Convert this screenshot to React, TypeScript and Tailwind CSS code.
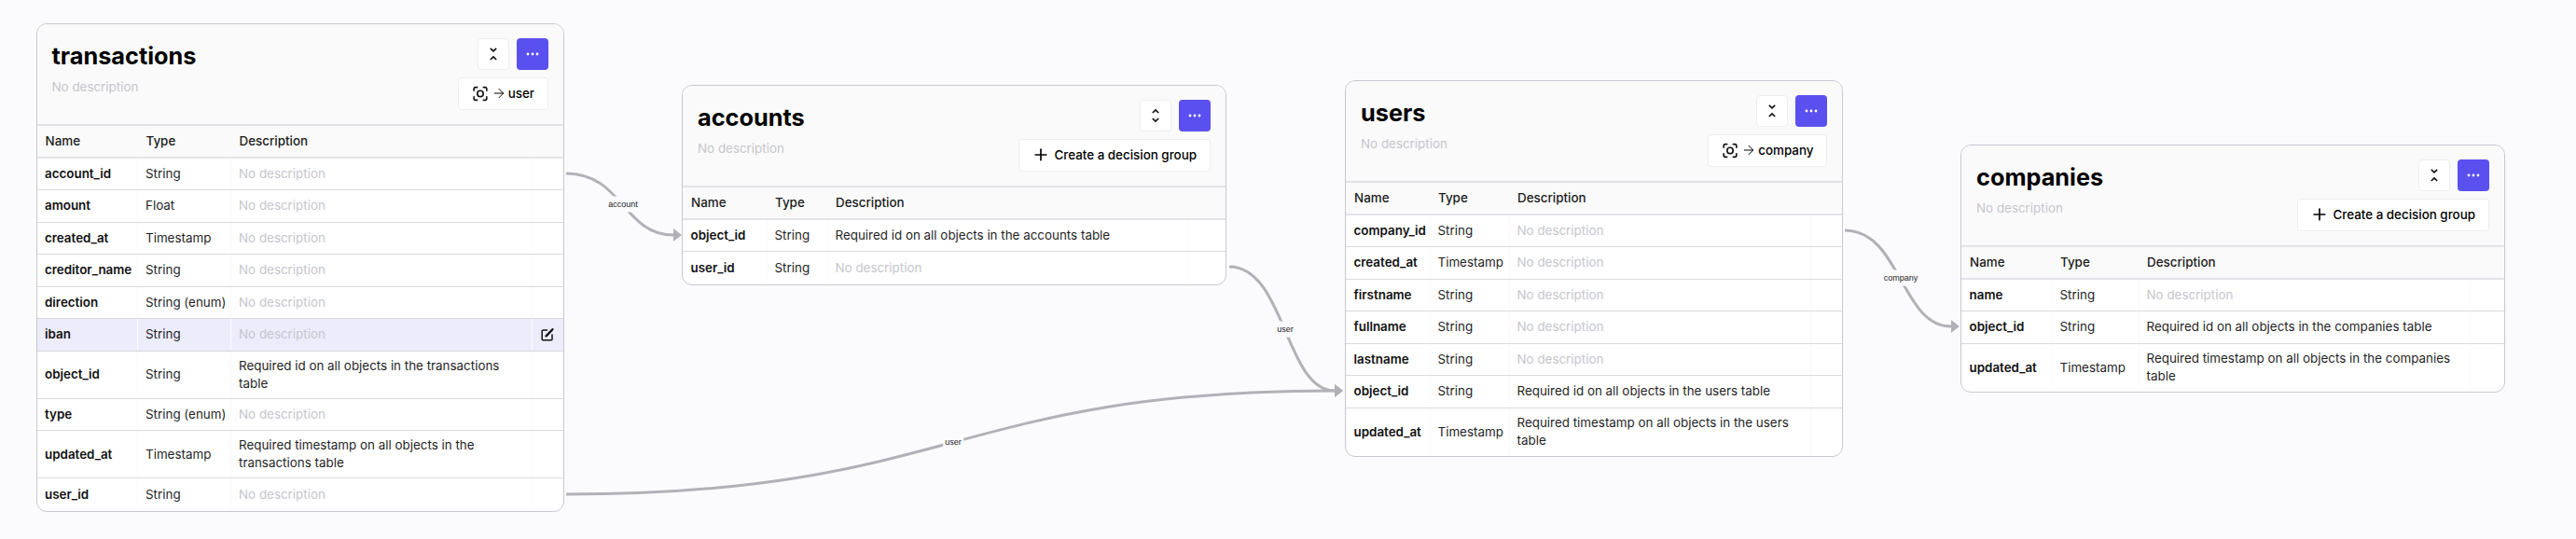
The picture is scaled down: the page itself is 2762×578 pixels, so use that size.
import { ArrowRight, Plus } from "lucide-react";

type Field = { name: string; type: string; description?: string; tall?: boolean; highlighted?: boolean };

type Table = {
  name: string;
  place: string;
  columns: string;
  expanded?: boolean;
  action: "decision" | string;
  fields: Field[];
};

const tables: Table[] = [
  {
    name: "transactions",
    place: "left-[38.5px] top-[25px] w-[566px]",
    columns: "grid-cols-[108.5px_100px_322.5px_1fr]",
    action: "user",
    fields: [
      { name: "account_id", type: "String" },
      { name: "amount", type: "Float" },
      { name: "created_at", type: "Timestamp" },
      { name: "creditor_name", type: "String" },
      { name: "direction", type: "String (enum)" },
      { name: "iban", type: "String", highlighted: true },
      { name: "object_id", type: "String", description: "Required id on all objects in the transactions table", tall: true },
      { name: "type", type: "String (enum)" },
      { name: "updated_at", type: "Timestamp", description: "Required timestamp on all objects in the transactions table", tall: true },
      { name: "user_id", type: "String" },
    ],
  },
  {
    name: "accounts",
    place: "left-[731px] top-[91px] w-[584px]",
    columns: "grid-cols-[90.5px_65px_386px_1fr]",
    expanded: true,
    action: "decision",
    fields: [
      { name: "object_id", type: "String", description: "Required id on all objects in the accounts table" },
      { name: "user_id", type: "String" },
    ],
  },
  {
    name: "users",
    place: "left-[1442px] top-[86px] w-[534px]",
    columns: "grid-cols-[90.5px_85px_323.5px_1fr]",
    action: "company",
    fields: [
      { name: "company_id", type: "String" },
      { name: "created_at", type: "Timestamp" },
      { name: "firstname", type: "String" },
      { name: "fullname", type: "String" },
      { name: "lastname", type: "String" },
      { name: "object_id", type: "String", description: "Required id on all objects in the users table" },
      { name: "updated_at", type: "Timestamp", description: "Required timestamp on all objects in the users table", tall: true },
    ],
  },
  {
    name: "companies",
    place: "left-[2102px] top-[155px] w-[584px]",
    columns: "grid-cols-[97.5px_93px_355px_1fr]",
    action: "decision",
    fields: [
      { name: "name", type: "String" },
      { name: "object_id", type: "String", description: "Required id on all objects in the companies table" },
      { name: "updated_at", type: "Timestamp", description: "Required timestamp on all objects in the companies table", tall: true },
    ],
  },
];

const edges = [
  { d: "M607 186 C668 186 668 252 722 252", tip: "722,245 731,252 722,259" },
  { d: "M1318 286 C1378 286 1378 419 1431 419", tip: "1431,412 1440,419 1431,426" },
  { d: "M607 530 C1022 530 1022 419 1431 419", tip: "1431,412 1440,419 1431,426" },
  { d: "M1978 247 C2038 247 2038 350 2092 350", tip: "2092,343 2101,350 2092,357" },
];

function CollapseIcon({ expanded }: { expanded?: boolean }) {
  return (
    <svg width="16" height="16" viewBox="0 0 16 16" fill="none" stroke="#111" strokeWidth="1.7">
      {expanded ? (
        <>
          <path d="M4.8 5 8 2 11.2 5" />
          <path d="M4.8 11 8 14 11.2 11" />
        </>
      ) : (
        <>
          <path d="M4.8 1.8 8 4.8 11.2 1.8" />
          <path d="M4.8 14 8 11 11.2 14" />
        </>
      )}
    </svg>
  );
}

function ScanIcon() {
  return (
    <svg width="16" height="17" viewBox="0 0 17 17" fill="none" stroke="#111" strokeWidth="1.7" strokeLinecap="round">
      <path d="M1.2 5V3.2a2 2 0 0 1 2-2H5" />
      <path d="M12 1.2h1.8a2 2 0 0 1 2 2V5" />
      <path d="M15.8 12v1.8a2 2 0 0 1-2 2H12" />
      <path d="M5 15.8H3.2a2 2 0 0 1-2-2V12" />
      <circle cx="8.5" cy="8.5" r="3.4" />
    </svg>
  );
}

function EditIcon() {
  return (
    <svg width="14" height="15" viewBox="0 0 14 15" fill="none" stroke="#111" strokeLinecap="round">
      <path d="M6.5 3H2.2a1 1 0 0 0-1 1v8.8a1 1 0 0 0 1 1H11a1 1 0 0 0 1-1V8" strokeWidth="1.5" />
      <path d="M5.6 9.4 12.4 2.2" strokeWidth="2.3" />
    </svg>
  );
}

function TableNode({ table }: { table: Table }) {
  const cell = "flex items-center border-r border-[#fafafb]";
  return (
    <div className={`absolute ${table.place} overflow-hidden rounded-[11px] border-[1.5px] border-[#c8c8d1] bg-white`}>
      <div className="flex h-[107px] justify-between bg-[#fafafa] pl-[16px] pr-[16px] pt-[15px]">
        <div>
          <h2 className="text-[25.3px] font-bold leading-[37px] text-black">{table.name}</h2>
          <p className="mt-[5px] text-[13.4px] leading-[20px] text-[#c6c6cc]">No description</p>
        </div>
        <div className="flex flex-col items-end gap-[8px]">
          <div className="flex gap-[8px]">
            <button className="flex h-[34px] w-[34px] items-center justify-center rounded-[4px] border border-[#eeeef0] bg-white">
              <CollapseIcon expanded={table.expanded} />
            </button>
            <button className="flex h-[34px] w-[34px] items-center justify-center rounded-[4px] bg-[#5a50f0]">
              <svg width="14" height="4" viewBox="0 0 14 4" fill="#fff">
                <circle cx="2" cy="2" r="1.4" />
                <circle cx="7" cy="2" r="1.4" />
                <circle cx="12" cy="2" r="1.4" />
              </svg>
            </button>
          </div>
          {table.action === "decision" ? (
            <button className="flex h-[34.5px] items-center gap-[4px] rounded-[4px] border border-[#eeeef0] bg-white pl-[13px] pr-[14px] text-[13.4px] font-medium text-black">
              <Plus size={20} strokeWidth={2} />
              Create a decision group
            </button>
          ) : (
            <button className="flex h-[34.5px] items-center rounded-[4px] border border-[#eeeef0] bg-white pl-[15px] pr-[13.5px] text-[13.4px] font-medium text-black">
              <ScanIcon />
              <ArrowRight size={16} strokeWidth={1.5} className="ml-[4px] mr-[2px]" />
              {table.action}
            </button>
          )}
        </div>
      </div>
      <div className={`grid h-[36.5px] ${table.columns} border-y-2 border-[#e3e3e8] bg-[#fafafa] text-[13.4px] font-medium text-[#1a1a1a]`}>
        <div className={`${cell} pl-[9px]`}>Name</div>
        <div className={`${cell} pl-[8.5px]`}>Type</div>
        <div className={`${cell} pl-[8.5px]`}>Description</div>
        <div />
      </div>
      {table.fields.map((field, index) => (
        <div
          key={field.name}
          className={`grid ${table.columns} text-[13.4px] leading-[19px] ${field.tall ? "h-[51px]" : "h-[34.5px]"} ${
            index < table.fields.length - 1 ? "border-b border-[#d9d9df]" : ""
          } ${field.highlighted ? "bg-[#edecfb]" : ""}`}
        >
          <div className={`${cell} pl-[8.5px] font-semibold text-[#111]`}>{field.name}</div>
          <div className={`${cell} pl-[8px] text-[#1f1f1f]`}>{field.type}</div>
          <div className={`${cell} pl-[8px] pr-[8px] ${field.description ? "text-[#1f1f1f]" : "text-[#c6c6cc]"}`}>
            {field.description ?? "No description"}
          </div>
          <div className="flex items-center justify-center">{field.highlighted && <EditIcon />}</div>
        </div>
      ))}
    </div>
  );
}

function EdgeLabel({ className, children }: { className: string; children: string }) {
  return (
    <span
      className={`absolute ${className} -translate-x-1/2 -translate-y-1/2 bg-[#fbfbfe] px-[2px] py-[3px] font-['Liberation_Sans',sans-serif] text-[9px] leading-[11px] text-[#222]`}
    >
      {children}
    </span>
  );
}

export default function App() {
  return (
    <div className="relative h-[578px] w-[2762px] overflow-hidden bg-[#fbfbfe] font-['Inter',sans-serif]">
      <svg className="absolute left-0 top-0" width="2762" height="578" fill="none">
        {edges.map((edge) => (
          <g key={edge.d}>
            <path d={edge.d} stroke="#b1b1b7" strokeWidth="3" />
            <polygon points={edge.tip} fill="#b1b1b7" />
          </g>
        ))}
      </svg>
      {tables.map((table) => (
        <TableNode key={table.name} table={table} />
      ))}
      <EdgeLabel className="left-[668px] top-[219px]">account</EdgeLabel>
      <EdgeLabel className="left-[1378px] top-[353px]">user</EdgeLabel>
      <EdgeLabel className="left-[1022px] top-[474px]">user</EdgeLabel>
      <EdgeLabel className="left-[2038px] top-[298px]">company</EdgeLabel>
    </div>
  );
}
